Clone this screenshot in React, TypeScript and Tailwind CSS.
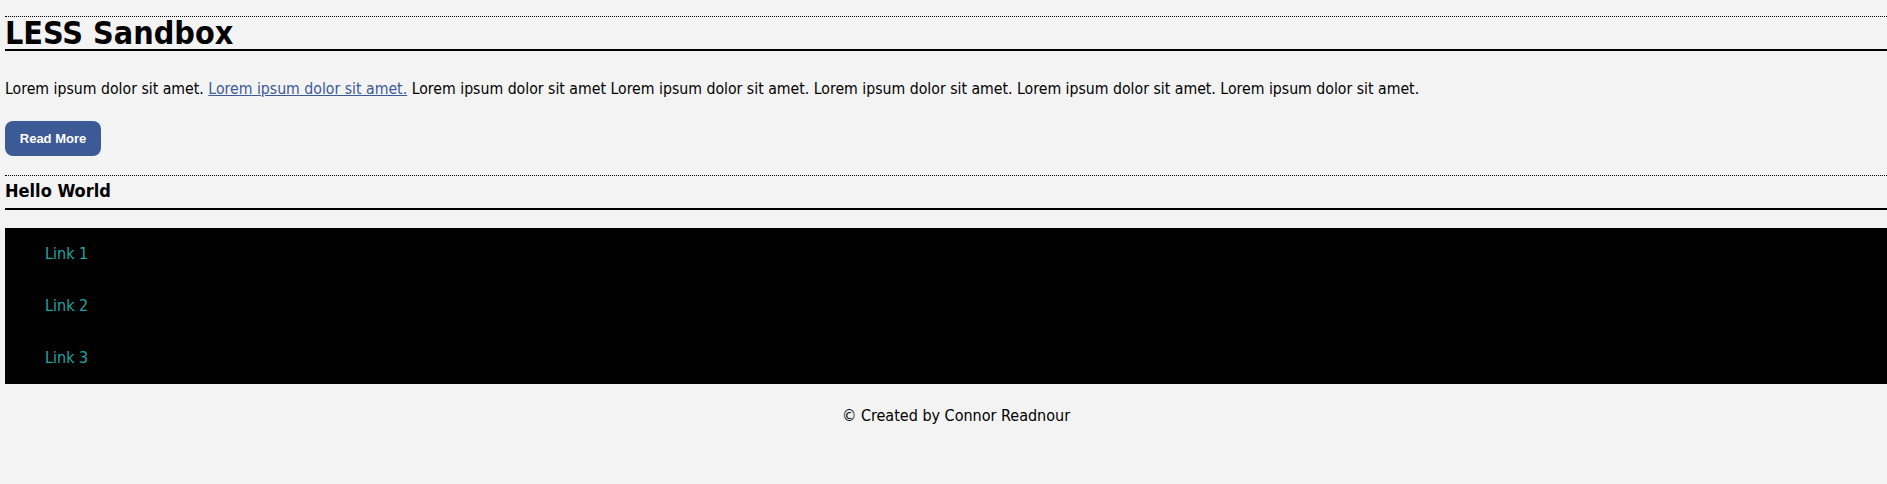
import React from 'react';

const font = { fontFamily: '"DejaVu Sans Condensed", "DejaVu Sans", sans-serif' };

export default function App() {
  const links = ['Link 1', 'Link 2', 'Link 3'];
  return (
    <div className="min-h-[484px] bg-[#f3f3f3] pl-[5px] pt-[16px] text-black" style={font}>
      <h1 className="h-[35px] border-t border-dotted border-black border-b-2 text-[32px] font-bold leading-[33px]" style={{ borderBottomStyle: 'solid' }}>
        LESS Sandbox
      </h1>
      <p className="mt-[28px] text-[15.7px] leading-[20px]">
        Lorem ipsum dolor sit amet.{' '}
        <a href="#" className="text-[#3c5a96] underline">Lorem ipsum dolor sit amet.</a>{' '}
        Lorem ipsum dolor sit amet Lorem ipsum dolor sit amet. Lorem ipsum dolor sit amet. Lorem ipsum dolor sit amet. Lorem ipsum dolor sit amet.
      </p>
      <button className="mt-[22px] flex h-[35px] w-[96px] items-center justify-center rounded-[8px] bg-[#3c5a96] text-[13px] font-bold text-white" style={{ fontFamily: '"Liberation Sans", Arial, sans-serif' }}>
        Read More
      </button>
      <h2 className="mt-[19px] h-[35px] border-t border-dotted border-black border-b-2 text-[18px] font-bold leading-[30px]" style={{ borderBottomStyle: 'solid' }}>
        Hello World
      </h2>
      <nav className="mt-[18px] flex flex-col bg-black pl-[40px]">
        {links.map((l) => (
          <a key={l} href="#" className="h-[52px] text-[16px] leading-[52px] text-[#1fa5a5]">
            {l}
          </a>
        ))}
      </nav>
      <footer className="pt-[22px] pl-[20px] text-center text-[16px] leading-[20px]">
        © Created by Connor Readnour
      </footer>
    </div>
  );
}
